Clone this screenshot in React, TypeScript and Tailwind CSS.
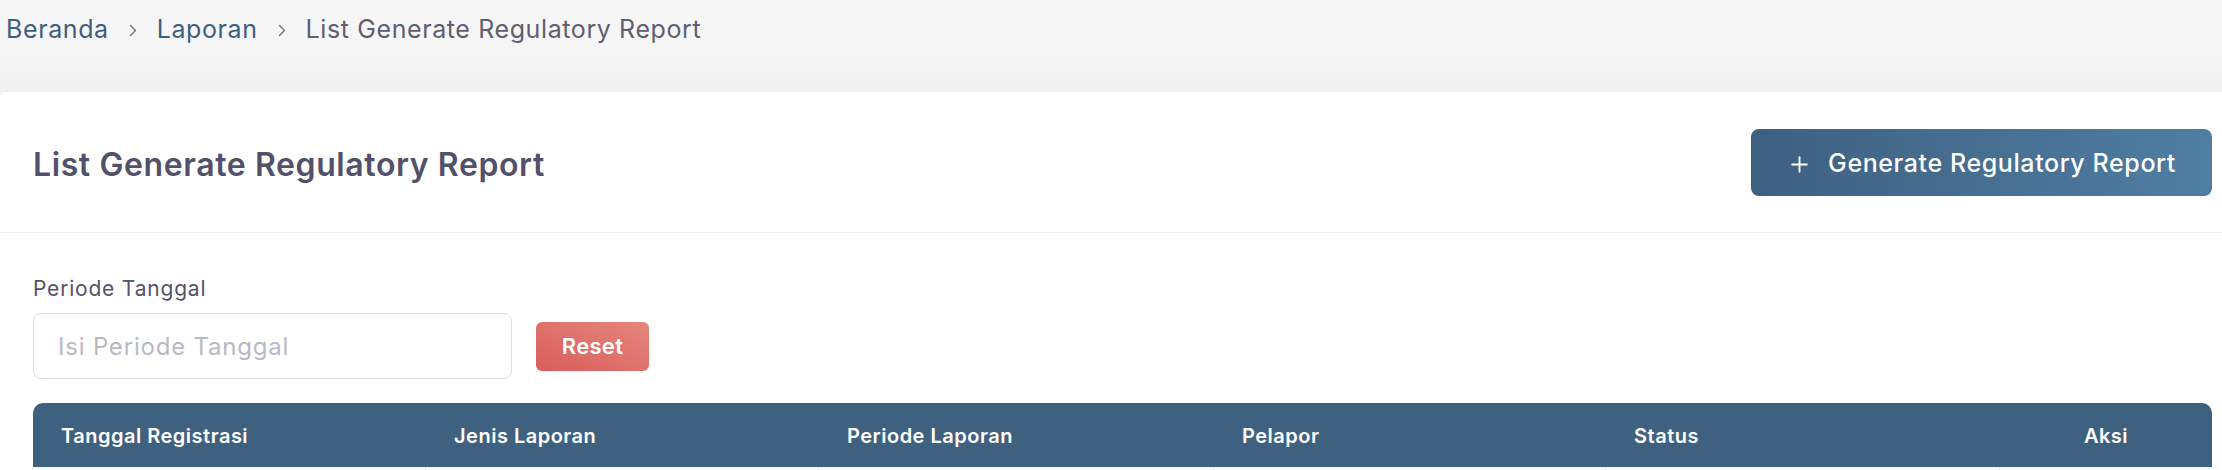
import { Plus } from "lucide-react";

const columns = [
  { label: "Tanggal Registrasi", align: "left" },
  { label: "Jenis Laporan", align: "left" },
  { label: "Periode Laporan", align: "left" },
  { label: "Pelapor", align: "left" },
  { label: "Status", align: "left" },
  { label: "Aksi", align: "center" },
];

function Chevron() {
  return (
    <svg width="8" height="13" viewBox="0 0 8 13" className="mx-[20px] mt-[3px]" fill="none">
      <path d="M1.5 1.5 L6.5 6.5 L1.5 11.5" stroke="#6f6e80" strokeWidth="1.4" strokeLinecap="round" strokeLinejoin="round" />
    </svg>
  );
}

export default function App() {
  return (
    <div className="w-full h-[470px] overflow-hidden bg-[#f6f6f6] font-['Inter',sans-serif]">
      {/* Breadcrumb */}
      <div className="h-[92px] bg-gradient-to-b from-[#f6f6f6] from-60% to-[#efefef] pl-[6px] pt-[11px]">
        <nav className="flex items-center text-[25px] leading-[36px] tracking-[0.6px]">
          <span className="text-[#3e5f7d]">Beranda</span>
          <Chevron />
          <span className="text-[#3e5f7d]">Laporan</span>
          <Chevron />
          <span className="text-[#5f5e72]">List Generate Regulatory Report</span>
        </nav>
      </div>

      {/* Card */}
      <div className="bg-white rounded-tl-[6px] h-[378px]">
        <div className="h-[141px] flex items-center justify-between pl-[33px] pr-[10px] border-b border-[#ebebeb]">
          <h1 className="pt-[5px] text-[32px] font-semibold text-[#53506b] tracking-[0.6px]">
            List Generate Regulatory Report
          </h1>
          <button className="w-[461px] h-[67px] pt-[4px] rounded-[8px] bg-gradient-to-r from-[#3e6080] to-[#4f7ea3] text-white flex items-center justify-center gap-[16px] text-[25px] font-medium tracking-[0.6px]">
            <Plus size={25} strokeWidth={1.8} />
            Generate Regulatory Report
          </button>
        </div>

        <div className="pl-[33px] pr-[10px] pt-[42px]">
          <label className="block text-[21px] leading-[28px] text-[#55526d] mb-[10px] tracking-[0.8px]">Periode Tanggal</label>
          <div className="flex items-center gap-[24px]">
            <input
              placeholder="Isi Periode Tanggal"
              className="w-[479px] h-[66px] rounded-[8px] border border-[#dddde5] px-[24px] text-[24px] tracking-[0.8px] placeholder:text-[#b9b8c5] outline-none"
            />
            <button className="w-[113px] h-[49px] rounded-[6px] bg-gradient-to-tr from-[#d85d59] to-[#e5867f] text-white text-[22px] font-semibold tracking-[0.3px]">
              Reset
            </button>
          </div>

          <div className="mt-[24px]">
            <div className="grid grid-cols-[393px_393px_395px_392px_394px_1fr] h-[64px] pt-[2px] items-center rounded-t-[10px] bg-[#3f6180] text-white text-[20px] font-semibold tracking-[0.5px]">
              {columns.map((c) => (
                <div key={c.label} className={c.align === "center" ? "text-center" : "pl-[28px]"}>
                  {c.label}
                </div>
              ))}
            </div>
            <div className="grid grid-cols-[393px_393px_395px_392px_394px_1fr] h-[40px] bg-[#f8f9fa]">
              {columns.map((c, i) => (
                <div key={c.label} className={i < columns.length - 1 ? "border-r border-[#e6e8eb]" : ""} />
              ))}
            </div>
          </div>
        </div>
      </div>
    </div>
  );
}
